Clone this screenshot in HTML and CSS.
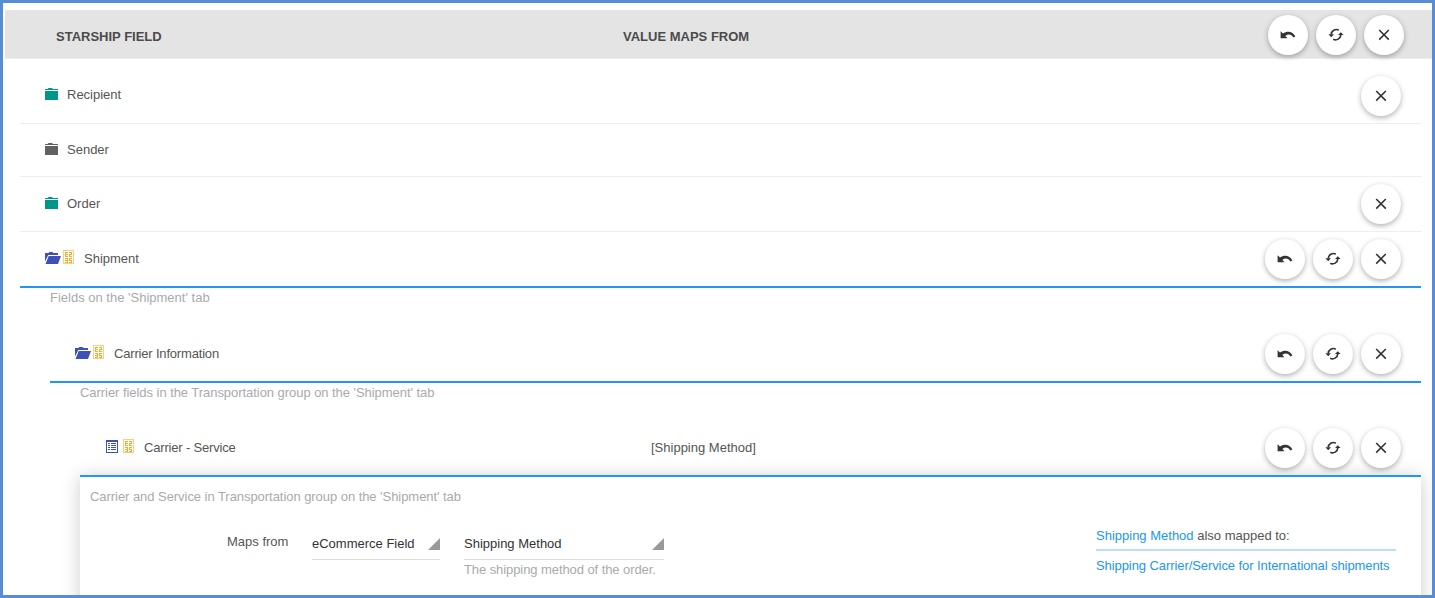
FILE: index.html
```
<!DOCTYPE html>
<html lang="en">
<head>
<meta charset="utf-8">
<title>Field mapping</title>
<link rel="stylesheet" href="styles.css">
</head>
<body>
<svg class="defs" width="0" height="0" aria-hidden="true">
  <symbol id="undo" viewBox="0 0 16 16"><path d="M.6 4.200v7h7L5.300 8.900c3-2.200 6.300-1.600 8.100 1.700l2-1C13 4.300 7.300 3.300 3 6.600z"/></symbol>
  <symbol id="sync" viewBox="0 0 16 16"><path d="M10.800 3.200A5.200 5.200 0 0 0 3.200 7.500M5.200 12.200A5.200 5.200 0 0 0 12.800 7.900" fill="none" stroke="#333" stroke-width="1.600"/><path d="M.4 7.300H6L3.200 10.200zM10 8.100h5.600L12.800 5.200z"/></symbol>
  <symbol id="close" viewBox="0 0 16 16"><path d="M3.200 3l9.600 9.600M12.800 3l-9.600 9.600" fill="none" stroke="#333" stroke-width="1.600"/></symbol>
  <symbol id="folder" viewBox="0 0 13 12"><path d="M0 1h2.500L3.500 0h3.500l1 1h5v1H0zM0 3h13v9H0z"/></symbol>
  <symbol id="open" viewBox="0 0 16 12"><path d="M0 1h3.500l.8-1H7.500l.8 1H13v2H3.300L0 9.500zM3.700 4H16l-3 8H.5z"/></symbol>
  <symbol id="code" viewBox="0 0 11 14"><rect x=".5" y=".5" width="10" height="13" fill="#fff" stroke="#ffcc80"/><path fill="#ffa726" d="M2 2h3v1H3v1h2v1H3v1h2v1H2zM6 2h3v3H7v1h2v1H6V4h2V3H6zM2 8h3v5H2v-1h2v-1H2v-1h2V9H2zM6 8h3v1H7v1h2v3H6v-1h2v-1H6z"/></symbol>
  <symbol id="list" viewBox="0 0 12 13"><path fill-rule="evenodd" d="M0 0h12v13H0zM1 2v10h10V2z"/><path d="M2 3h2v1H2zM5 3h5v1H5zM2 5h2v1H2zM5 5h5v1H5zM2 7h2v1H2zM5 7h5v1H5zM2 9h2v1H2zM5 9h5v1H5z"/></symbol>
</svg>
<main class="frame">
  <header class="head">
    <div class="name">STARSHIP FIELD</div>
    <div class="value">VALUE MAPS FROM</div>
    <div class="actions">
      <button class="btn"><svg><use href="#undo"/></svg></button>
      <button class="btn"><svg><use href="#sync"/></svg></button>
      <button class="btn"><svg><use href="#close"/></svg></button>
    </div>
  </header>
  <section class="tree">
    <div class="row first">
      <svg class="folder teal"><use href="#folder"/></svg><span class="label">Recipient</span>
      <div class="actions"><button class="btn"><svg><use href="#close"/></svg></button></div>
    </div>
    <div class="row short">
      <svg class="folder gray"><use href="#folder"/></svg><span class="label">Sender</span>
    </div>
    <div class="row">
      <svg class="folder teal"><use href="#folder"/></svg><span class="label">Order</span>
      <div class="actions"><button class="btn"><svg><use href="#close"/></svg></button></div>
    </div>
    <div class="row active">
      <svg class="open"><use href="#open"/></svg><svg class="code"><use href="#code"/></svg><span class="label">Shipment</span>
      <div class="actions">
        <button class="btn"><svg><use href="#undo"/></svg></button>
        <button class="btn"><svg><use href="#sync"/></svg></button>
        <button class="btn"><svg><use href="#close"/></svg></button>
      </div>
    </div>
    <div class="branch">
      <p class="desc">Fields on the 'Shipment' tab</p>
      <div class="row active">
        <svg class="open"><use href="#open"/></svg><svg class="code"><use href="#code"/></svg><span class="label tight">Carrier Information</span>
        <div class="actions">
          <button class="btn"><svg><use href="#undo"/></svg></button>
          <button class="btn"><svg><use href="#sync"/></svg></button>
          <button class="btn"><svg><use href="#close"/></svg></button>
        </div>
      </div>
      <div class="branch">
        <p class="desc snug">Carrier fields in the Transportation group on the 'Shipment' tab</p>
        <div class="row leaf">
          <div class="leaf-name"><svg class="list"><use href="#list"/></svg><svg class="code"><use href="#code"/></svg><span class="label tight">Carrier - Service</span></div>
          <span class="mapped">[Shipping Method]</span>
          <div class="actions">
            <button class="btn"><svg><use href="#undo"/></svg></button>
            <button class="btn"><svg><use href="#sync"/></svg></button>
            <button class="btn"><svg><use href="#close"/></svg></button>
          </div>
        </div>
        <div class="panel">
          <p class="hint snug">Carrier and Service in Transportation group on the 'Shipment' tab</p>
          <div class="form">
            <span class="caption">Maps from</span>
            <div class="select source"><span>eCommerce Field</span><i class="tri"></i></div>
            <div class="field">
              <div class="select"><span>Shipping Method</span><i class="tri"></i></div>
              <p class="hint close-set">The shipping method of the order.</p>
            </div>
            <div class="also">
              <p class="also-title"><a>Shipping Method</a> also mapped to:</p>
              <p class="also-item close-set"><a>Shipping Carrier/Service for International shipments</a></p>
            </div>
          </div>
        </div>
      </div>
    </div>
  </section>
</main>
</body>
</html>
```
FILE: styles.css
```
* { box-sizing: border-box; }
body { margin: 0; background: #fff; font: 13px/20px "Liberation Sans", Arial, sans-serif; color: #555; }
p { margin: 0; }
.defs { display: block; position: absolute; }
.frame { height: 598px; border: 3px solid #558ed5; padding: 7px 0 0 2px; overflow: hidden; }
.head { display: flex; align-items: center; height: 49px; padding: 0 28px 0 51px; background: #e4e4e4; border-bottom: 1px solid #eee; font-weight: bold; color: #4b4b4b; }
.head .name { width: 567px; padding-top: 5px; }
.head .value { padding-top: 5px; }
.head .actions { padding-top: 2px; }
.actions { display: flex; gap: 8px; margin-left: auto; }
.btn { display: flex; align-items: center; justify-content: center; width: 40px; height: 40px; padding: 0; border: 0; border-radius: 50%; background: #fff; box-shadow: 0 2px 5px rgba(0,0,0,.26), 0 1px 8px rgba(0,0,0,.06); }
.btn svg { width: 16px; height: 16px; fill: #333; }
.tree { padding: 0 11px 0 15px; }
.row { display: flex; align-items: center; height: 55px; padding: 0 20px 0 25px; border-bottom: 1px solid #eee; }
.row.first { height: 65px; padding-top: 10px; }
.row.first .label { margin-top: -2px; }
.row.short { height: 53px; }
.row.active, .row.leaf { height: 56px; border-bottom: 2px solid #2196f3; }
.row.leaf { position: relative; }
.row svg { flex: none; }
.folder { width: 13px; height: 12px; margin: -2px 9px 0 0; }
.row.first .folder { margin-top: -4px; }
.teal { fill: #009688; }
.gray { fill: #616161; }
.open { width: 16px; height: 12px; margin: -2px 2px 0 0; fill: #3f51b5; }
.code { width: 11px; height: 14px; margin: -4px 10px 0 0; }
.list { width: 12px; height: 13px; margin: -3px 5px 0 1px; fill: #3f51b5; }
.branch { padding-left: 30px; }
.desc { height: 39px; color: #aaa; }
.branch .branch .desc { height: 38px; }
.tight { letter-spacing: -.18px; }
.snug { letter-spacing: -.05px; }
.close-set { letter-spacing: -.08px; }
.leaf-name { display: flex; align-items: center; width: 546px; }
.panel { height: 160px; padding: 10px 25px 0 10px; box-shadow: 0 0 18px rgba(0,0,0,.2); }
.hint { color: #aaa; }
.form { display: flex; align-items: flex-start; padding-top: 19px; }
.caption { width: 85px; margin-left: 137px; padding-top: 6px; }
.select { display: flex; justify-content: space-between; height: 34px; padding-top: 8px; border-bottom: 1px solid #ddd; color: #333; }
.source { width: 128px; margin-right: 24px; }
.field { width: 200px; }
.tri { width: 12px; height: 12px; margin-top: 4px; background: #999; clip-path: polygon(100% 0, 100% 100%, 0 100%); }
.also { width: 300px; margin-left: auto; }
.also-title { height: 25px; border-bottom: 2px solid #bbdefb; }
.also-item { padding-top: 5px; }
a { color: #2196f3; }
```
